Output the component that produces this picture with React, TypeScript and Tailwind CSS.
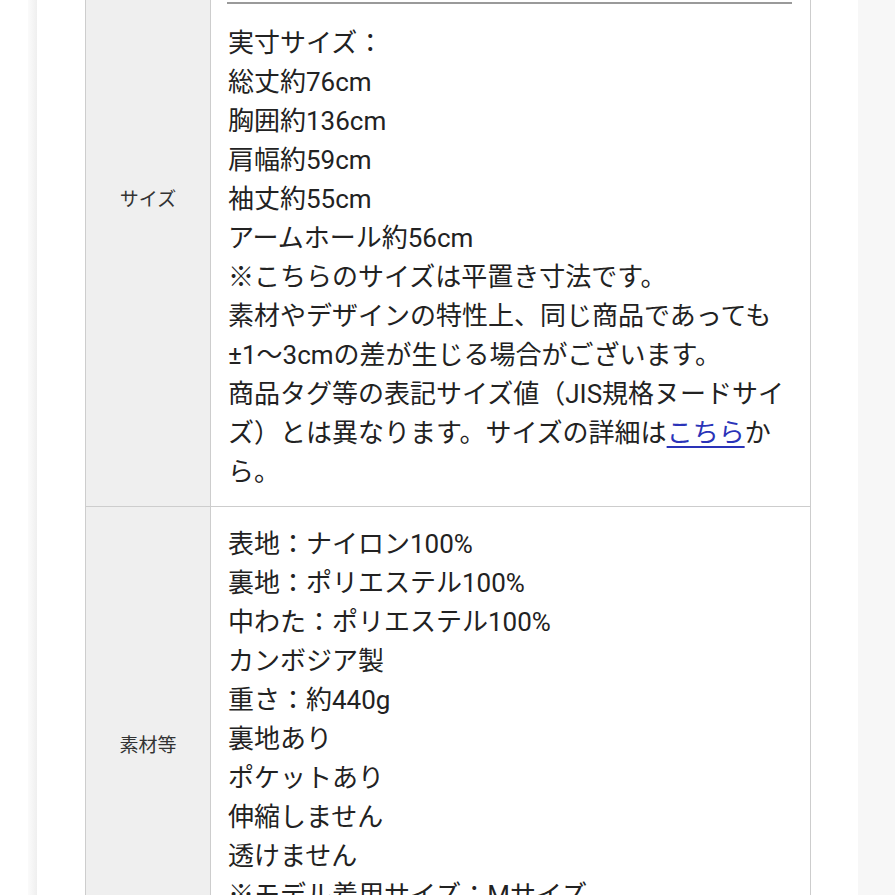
import React from "react";

const sizeLines: React.ReactNode[] = [
  "実寸サイズ：",
  "総丈約76cm",
  "胸囲約136cm",
  "肩幅約59cm",
  "袖丈約55cm",
  "アームホール約56cm",
  "※こちらのサイズは平置き寸法です。",
  "素材やデザインの特性上、同じ商品であっても",
  "±1〜3cmの差が生じる場合がございます。",
  "商品タグ等の表記サイズ値（JIS規格ヌードサイ",
  <>
    ズ）とは異なります。サイズの詳細は
    <a href="#" className="text-[#2a33b8] underline decoration-2 underline-offset-[4px]">
      こちら
    </a>
    か
  </>,
  "ら。",
];

const materialLines: string[] = [
  "表地：ナイロン100%",
  "裏地：ポリエステル100%",
  "中わた：ポリエステル100%",
  "カンボジア製",
  "重さ：約440g",
  "裏地あり",
  "ポケットあり",
  "伸縮しません",
  "透けません",
  "※モデル着用サイズ：Mサイズ",
  "洗濯機洗い可",
];

export default function App() {
  return (
    <div className="flex w-[895px] h-[895px] overflow-hidden bg-white font-['Roboto','Noto_Sans_CJK_JP',sans-serif] text-[#222]">
      <div className="w-[28px] shrink-0 bg-white" />
      <div className="w-[9px] shrink-0 bg-gradient-to-r from-[#fbfbfb] to-[#efefef]" />
      <div className="w-[821px] shrink-0 bg-white pl-[48px]">
        <table className="-mt-[107px] w-[726px] border-collapse">
          <tbody>
            <tr>
              <td className="w-[125px] border border-[#cdcdcd] bg-[#efefef] text-center align-middle text-[19px] text-[#333]">
                サイズ
              </td>
              <td className="border border-[#cdcdcd] bg-white pl-[16px] pr-[18px] pt-[18px] pb-[14px] align-top">
                <div className="h-[90px]" />
                <div className="h-[2px] bg-[#9a9a9a] mb-[20px]" />
                <div className="text-[26px] leading-[39px] whitespace-nowrap pl-[1px]">
                  {sizeLines.map((l, i) => (
                    <div key={i}>{l}</div>
                  ))}
                </div>
              </td>
            </tr>
            <tr>
              <td className="w-[125px] border border-[#cdcdcd] bg-[#efefef] text-center align-middle text-[19px] text-[#333]">
                素材等
              </td>
              <td className="border border-[#cdcdcd] bg-white pl-[17px] pr-[18px] pt-[18px] pb-[32px] align-top">
                <div className="text-[26px] leading-[39px] whitespace-nowrap">
                  {materialLines.map((l, i) => (
                    <div key={i}>{l}</div>
                  ))}
                </div>
              </td>
            </tr>
          </tbody>
        </table>
      </div>
      <div className="flex-1 bg-[#f7f7f7]" />
    </div>
  );
}
